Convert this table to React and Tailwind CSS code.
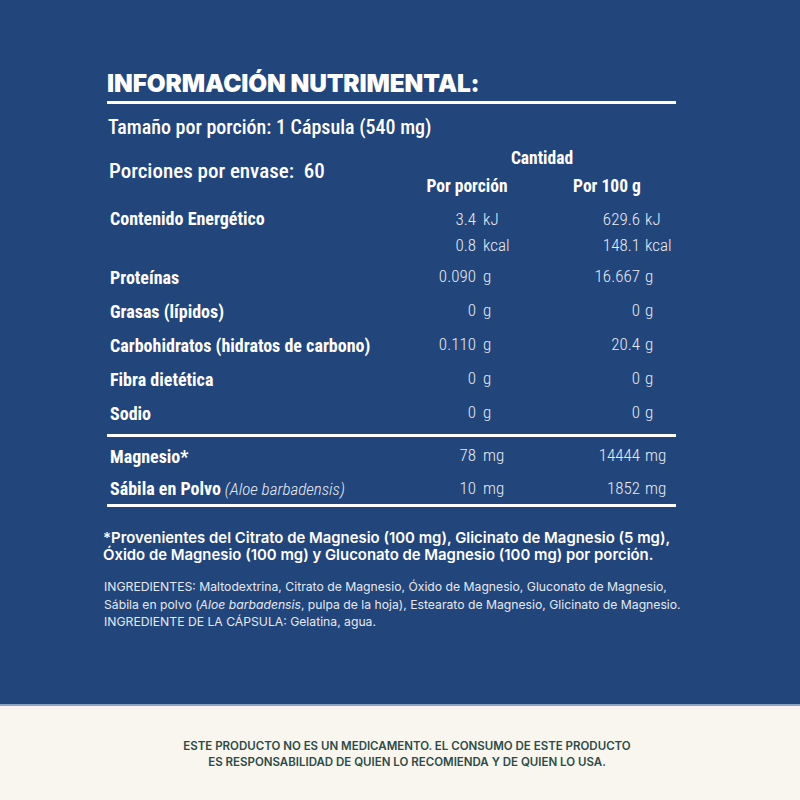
import React from 'react';

const narrow = { fontFamily: '"Roboto Condensed", Roboto, sans-serif', fontStretch: 'condensed' };

const rows = [
  { label: 'Contenido Energético', a: '3.4', au: 'kJ', b: '629.6', bu: 'kJ', cls: 'h-[26px] items-end pb-[1px]' },
  { label: '', a: '0.8', au: 'kcal', b: '148.1', bu: 'kcal', cls: 'h-[27px] items-center pb-[1px]' },
  { label: 'Proteínas', a: '0.090', au: 'g', b: '16.667', bu: 'g' },
  { label: 'Grasas (lípidos)', a: '0', au: 'g', b: '0', bu: 'g' },
  { label: 'Carbohidratos (hidratos de carbono)', a: '0.110', au: 'g', b: '20.4', bu: 'g' },
  { label: 'Fibra dietética', a: '0', au: 'g', b: '0', bu: 'g' },
  { label: 'Sodio', a: '0', au: 'g', b: '0', bu: 'g' },
];

function Row({ label, a, au, b, bu, cls = 'h-[34px] items-center' }) {
  return (
    <div className={`flex ${cls} text-[17px]`}>
      <div className="flex-1 pl-[3px] text-[18px] font-bold text-white">{label}</div>
      <div className="w-[80px] text-right font-light text-[#e6ebf3]">{a}</div>
      <div className="w-[84px] pl-[7px] font-light text-[#e6ebf3]">{au}</div>
      <div className="w-[80px] text-right font-light text-[#e6ebf3]">{b}</div>
      <div className="w-[36px] pl-[5px] font-light text-[#e6ebf3]">{bu}</div>
    </div>
  );
}

export default function App() {
  return (
    <div className="w-[800px] h-[800px] flex flex-col">
      <div className="h-[704px] bg-[#22457b] pt-[66px]">
        <div className="ml-[107px] w-[569px]">
          <h1 className="text-[24.4px] leading-[34px] font-black text-white tracking-[-0.1px]" style={{ fontFamily: 'Inter, sans-serif' }}>
            INFORMACIÓN NUTRIMENTAL:
          </h1>
          <div className="h-[3px] bg-white mt-[1px]" />

          <div style={narrow} className="text-white">
            <div className="text-[20px] pl-[1px] mt-[13px] leading-[20px] font-medium">Tamaño por porción: 1 Cápsula (540 mg)</div>

            <div className="flex mt-[10px]">
              <div className="flex-1 pl-[2px] pt-[13px] text-[21px] leading-[22px] font-medium">Porciones por envase:&nbsp; 60</div>
              <div className="w-[280px] flex flex-col font-bold text-[17.5px]">
                <div className="w-[292px] text-center leading-[20px] mt-[1px]">Cantidad</div>
                <div className="flex mt-[8px] leading-[20px]">
                  <div className="w-[148px] text-center">Por porción</div>
                  <div className="w-[144px] text-center">Por 100 g</div>
                </div>
              </div>
            </div>

            <div className="mt-[11px]">
              {rows.map((r, i) => (
                <Row key={i} {...r} />
              ))}
            </div>

            <div className="h-[3px] bg-white mt-[4px]" />
            <div className="pt-[2px]">
              <Row label="Magnesio*" a="78" au="mg" b="14444" bu="mg" />
              <div className="flex h-[31px] items-center text-[17px]">
                <div className="flex-1 pl-[3px] text-white">
                  <span className="font-bold text-[18px]">Sábila en Polvo</span> <span className="italic font-light text-[#e6ebf3]">(Aloe barbadensis)</span>
                </div>
                <div className="w-[80px] text-right font-light text-[#e6ebf3]">10</div>
                <div className="w-[84px] pl-[7px] font-light text-[#e6ebf3]">mg</div>
                <div className="w-[80px] text-right font-light text-[#e6ebf3]">1852</div>
                <div className="w-[36px] pl-[5px] font-light text-[#e6ebf3]">mg</div>
              </div>
            </div>
            <div className="h-[3px] bg-white" />
          </div>

          <div className="mt-[23px] -ml-[4px] text-[14.9px] leading-[16.5px] font-semibold text-white whitespace-nowrap" style={{ fontFamily: 'Inter, sans-serif' }}>
            <div>*Provenientes del Citrato de Magnesio (100 mg), Glicinato de Magnesio (5 mg),</div>
            <div>Óxido de Magnesio (100 mg) y Gluconato de Magnesio (100 mg) por porción.</div>
          </div>

          <div className="mt-[15px] -ml-[3px] text-[12.2px] leading-[17.5px] text-[#e4e9f1] whitespace-nowrap" style={{ fontFamily: 'Inter, sans-serif' }}>
            <div className="h-[17.5px]">INGREDIENTES: Maltodextrina, Citrato de Magnesio, Óxido de Magnesio, Gluconato de Magnesio,</div>
            <div className="h-[17.5px]">
              Sábila en polvo (<span className="italic">Aloe barbadensis</span>, pulpa de la hoja), Estearato de Magnesio, Glicinato de Magnesio.
            </div>
            <div className="h-[17.5px]">INGREDIENTE DE LA CÁPSULA: Gelatina, agua.</div>
          </div>
        </div>
      </div>
      <div className="h-[2px] bg-[#8ea3c4]" />
      <div className="flex-1 bg-[#f8f6ee] flex flex-col items-center pl-[14px] pt-[32px] text-[11.5px] leading-[16px] font-semibold text-[#2d4a47]" style={{ fontFamily: 'Inter, sans-serif' }}>
        <div>ESTE PRODUCTO NO ES UN MEDICAMENTO. EL CONSUMO DE ESTE PRODUCTO</div>
        <div>ES RESPONSABILIDAD DE QUIEN LO RECOMIENDA Y DE QUIEN LO USA.</div>
      </div>
    </div>
  );
}
